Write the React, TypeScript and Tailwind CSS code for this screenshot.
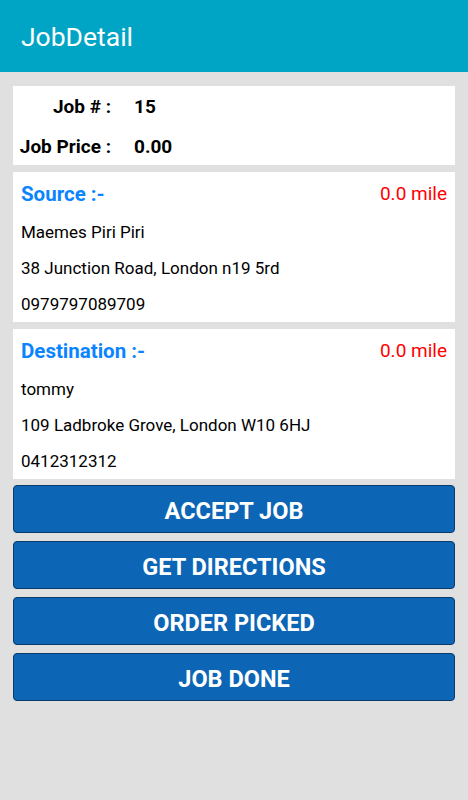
export default function App() {
  const buttons = ['ACCEPT JOB', 'GET DIRECTIONS', 'ORDER PICKED', 'JOB DONE'];
  const stops = [
    {
      title: 'Source :-',
      lines: ['Maemes Piri Piri', '38 Junction Road, London n19 5rd', '0979797089709'],
    },
    {
      title: 'Destination :-',
      lines: ['tommy', '109 Ladbroke Grove, London W10 6HJ', '0412312312'],
    },
  ];

  return (
    <div className="min-h-[800px] bg-[#e0e0e0] font-['Roboto',sans-serif]">
      <div className="h-[72px] bg-[#00a5c5] flex items-center px-[21px] pt-[2px]">
        <h1 className="text-white text-[26.5px] leading-none">JobDetail</h1>
      </div>

      <div className="px-[13px] pt-[14px] flex flex-col gap-[7px]">
        <div className="bg-white h-[79px] text-black font-bold text-[19px] pt-[1px]">
          <div className="grid grid-cols-[98px_1fr] gap-x-[23px]">
            <div className="h-[40px] flex items-center justify-end">Job # :</div>
            <div className="h-[40px] flex items-center">15</div>
            <div className="h-[40px] flex items-center justify-end">Job Price :</div>
            <div className="h-[40px] flex items-center">0.00</div>
          </div>
        </div>

        {stops.map((s) => (
          <div key={s.title} className="bg-white h-[150px] px-[8px] pt-[2px]">
            <div className="h-[41px] flex items-center justify-between">
              <span className="text-[#0a84ff] font-bold text-[20.5px]">{s.title}</span>
              <span className="text-[#ff0000] text-[19px]">0.0 mile</span>
            </div>
            {s.lines.map((l) => (
              <div key={l} className="h-[36px] flex items-center text-[17px] text-black">
                {l}
              </div>
            ))}
          </div>
        ))}
      </div>

      <div className="px-[13px] pt-[6px] flex flex-col gap-[8px]">
        {buttons.map((b) => (
          <div
            key={b}
            className="h-[48px] pt-[5px] bg-[#0d66b5] border border-[#0b3a66] rounded-[4px] flex items-center justify-center text-white font-bold text-[23.5px]"
          >
            {b}
          </div>
        ))}
      </div>
    </div>
  );
}
